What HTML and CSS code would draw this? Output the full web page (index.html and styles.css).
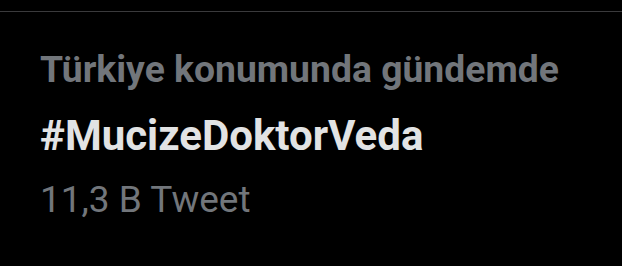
FILE: index.html
```html
<!DOCTYPE html>
<html lang="tr">
<head>
<meta charset="UTF-8">
<meta name="viewport" content="width=device-width, initial-scale=1.0">
<title>Gündem</title>
<link rel="stylesheet" href="styles.css">
</head>
<body>

<div class="trend">
    <div class="trend-context">Türkiye konumunda gündemde</div>
    <div class="trend-name">#MucizeDoktorVeda</div>
    <div class="trend-count">11,3 B Tweet</div>
</div>

</body>
</html>
```

FILE: styles.css
```css
body {
    margin: 0;
    background-color: #000;
    font-family: Roboto, "Noto Sans", sans-serif;
}

.trend {
    margin-top: 11px;
    border-top: 1px solid #3a3a3c;
    padding: 35px 40px 0 40px;
}

.trend-context {
    color: #72767b;
    font-size: 37.3px;
    font-weight: bold;
    line-height: 44px;
}

.trend-name {
    color: #e2e3e4;
    font-size: 42px;
    font-weight: bold;
    line-height: 50px;
    margin-top: 20px;
}

.trend-count {
    color: #72767b;
    font-size: 37px;
    line-height: 44px;
    margin-top: 17px;
}
```
